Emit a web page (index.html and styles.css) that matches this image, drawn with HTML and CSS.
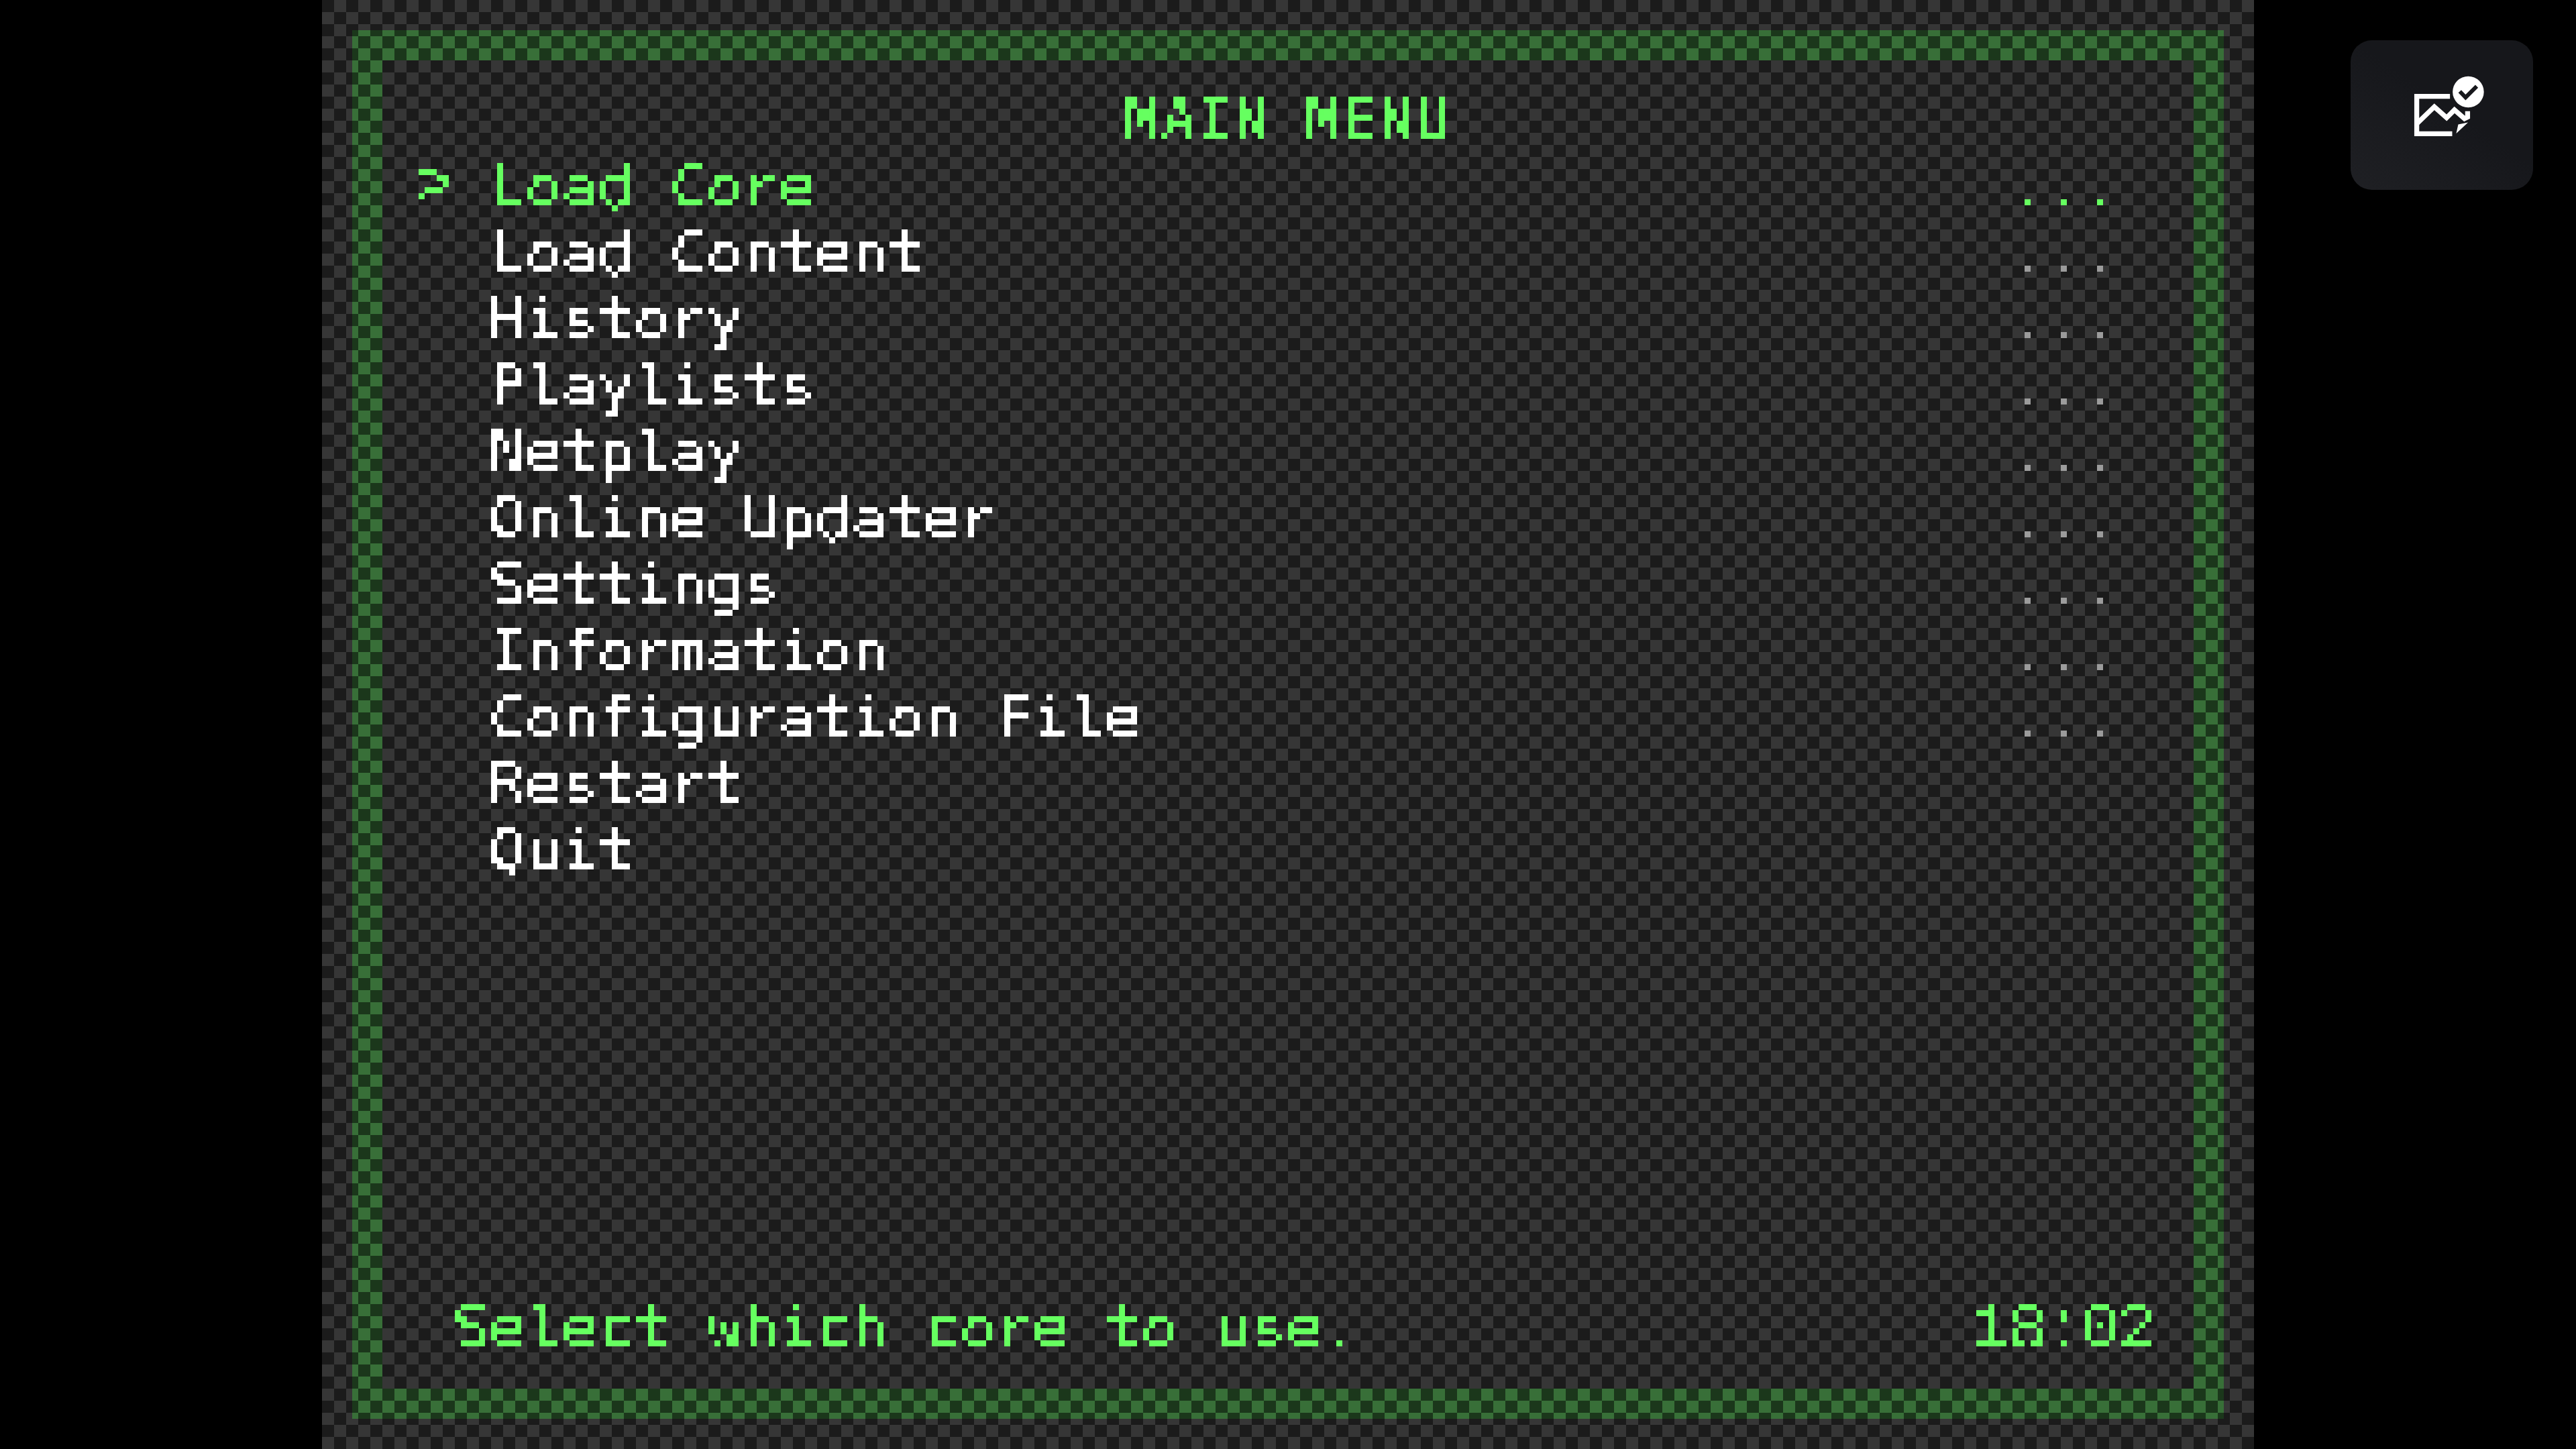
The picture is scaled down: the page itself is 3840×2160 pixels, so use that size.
FILE: index.html
```html
<!DOCTYPE html>
<html lang="en">
<head>
    <meta charset="UTF-8">
    <meta name="viewport" content="width=device-width, initial-scale=1.0">
    <title>Main Menu</title>
    <link rel="stylesheet" href="styles.css">
</head>
<body>
    <svg class="filter-defs" aria-hidden="true">
        <filter id="pixelate" x="0" y="0" width="100%" height="100%" color-interpolation-filters="sRGB">
            <feMorphology in="SourceGraphic" operator="dilate" radius="0 1" result="thick"/>
            <feFlood x="4" y="4" width="1" height="1"/>
            <feComposite width="9" height="9"/>
            <feTile result="grid"/>
            <feComposite in="thick" in2="grid" operator="in"/>
            <feComponentTransfer>
                <feFuncA type="discrete" tableValues="0 1"/>
            </feComponentTransfer>
            <feMorphology operator="dilate" radius="4"/>
        </filter>
    </svg>

    <div class="screen">
        <div class="frame">
            <div class="panel">
                <div class="menu">
                    <h1 class="menu-title">MAIN MENU</h1>
                    <ul class="menu-list">
                        <li class="menu-row active"><span class="cursor">&gt;</span><span>Load Core</span><span class="more">...</span></li>
                        <li class="menu-row"><span></span><span>Load Content</span><span class="more">...</span></li>
                        <li class="menu-row"><span></span><span>History</span><span class="more">...</span></li>
                        <li class="menu-row"><span></span><span>Playlists</span><span class="more">...</span></li>
                        <li class="menu-row"><span></span><span>Netplay</span><span class="more">...</span></li>
                        <li class="menu-row"><span></span><span>Online Updater</span><span class="more">...</span></li>
                        <li class="menu-row"><span></span><span>Settings</span><span class="more">...</span></li>
                        <li class="menu-row"><span></span><span>Information</span><span class="more">...</span></li>
                        <li class="menu-row"><span></span><span>Configuration File</span><span class="more">...</span></li>
                        <li class="menu-row"><span></span><span>Restart</span></li>
                        <li class="menu-row"><span></span><span>Quit</span></li>
                    </ul>
                    <div class="status">
                        <span>Select which core to use.</span>
                        <span class="clock">18:02</span>
                    </div>
                </div>
            </div>
        </div>
    </div>

    <div class="toast">
        <svg class="toast-icon" viewBox="280 195 400 400" aria-hidden="true">
            <path class="icon-line" d="M515 311H366V479H525"/>
            <path class="icon-line" d="M368 432L445 358L500 407L535 372L580 411L594 404V378"/>
            <path class="icon-fill" d="M543 478L596 428L552 437Z"/>
            <circle class="icon-fill" cx="597" cy="291" r="70"/>
            <path class="icon-check" d="M559 289L585 316L635 266"/>
        </svg>
    </div>
</body>
</html>
```

FILE: styles.css
```css
html, body {
    margin: 0;
    height: 2160px;
    overflow: hidden;
    background: #000;
}

.filter-defs {
    display: block;
    width: 0;
    height: 0;
}

.screen {
    width: 2880px;
    height: 2160px;
    margin-left: 480px;
    padding: 45px;
    box-sizing: border-box;
    background: repeating-conic-gradient(#363636 0 25%, #1b1b1b 0 50%) 0 0 / 36px 36px;
}

.frame {
    height: 100%;
    padding: 45px;
    box-sizing: border-box;
    background: repeating-conic-gradient(#386f38 0 25%, #1b371b 0 50%) -45px -45px / 36px 36px;
}

.panel {
    height: 100%;
    background: repeating-conic-gradient(#363636 0 25%, #1b1b1b 0 50%) -90px -90px / 36px 36px;
}

.menu {
    display: flex;
    flex-direction: column;
    height: 100%;
    padding: 40px 0 41px;
    box-sizing: border-box;
    color: #fff;
    font: 86.4px/99px "DejaVu Sans Mono", monospace;
    letter-spacing: 1.99px;
    filter: url(#pixelate);
}

.menu-title {
    margin: 0;
    font: inherit;
    color: #66ff60;
    text-align: center;
}

.menu-list {
    margin: 0;
    padding: 0;
    list-style: none;
}

.menu-row {
    display: grid;
    grid-template-columns: 108px 1fr auto;
    padding: 0 112px 0 52px;
}

.menu-row.active {
    color: #66ff60;
}

.cursor {
    font-family: "Liberation Mono", monospace;
    font-size: 90px;
}

.more {
    color: #9c9c9c;
}

.active .more {
    color: inherit;
}

.status {
    display: flex;
    justify-content: space-between;
    height: 99px;
    margin-top: auto;
    padding: 0 60px 0 106px;
    color: #66ff60;
}

.clock {
    padding-top: 4px;
    font-family: "Liberation Mono", monospace;
    font-size: 96px;
    letter-spacing: -3.6px;
}

.toast {
    position: absolute;
    top: 60px;
    left: 3504px;
    width: 272px;
    height: 223px;
    display: flex;
    align-items: center;
    justify-content: center;
    border-radius: 32px;
    background: linear-gradient(35deg, #1f2024, #16171b 55%);
}

.toast-icon {
    width: 133px;
    height: 133px;
}

.icon-line {
    fill: none;
    stroke: #fff;
    stroke-width: 22;
}

.icon-fill {
    fill: #fff;
}

.icon-check {
    fill: none;
    stroke: #17181c;
    stroke-width: 18;
}
```
